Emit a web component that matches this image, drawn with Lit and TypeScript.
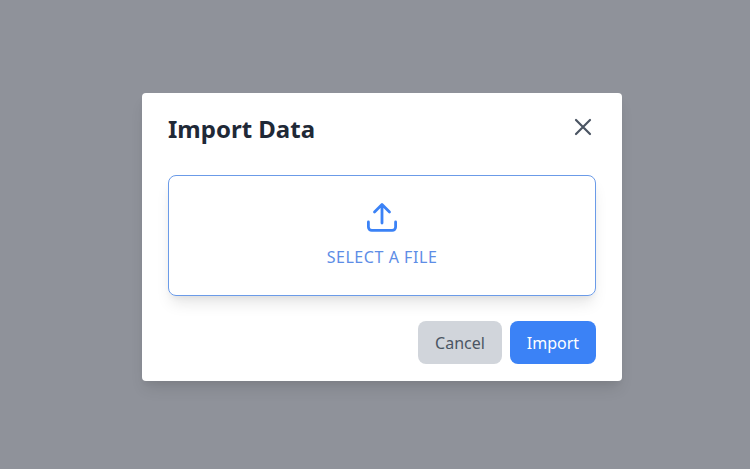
import { LitElement, html, css } from "lit";
import { customElement } from "lit/decorators.js";

@customElement("app-root")
export class AppRoot extends LitElement {
  static styles = css`
    :host { display: block; width: 750px; height: 469px; overflow: hidden; }
    .overlay {
      box-sizing: border-box; width: 750px; height: 469px;
      background: #8f929a; padding: 93px 0 0 142px;
      font-family: "Noto Sans", "Open Sans", sans-serif;
    }
    .modal {
      box-sizing: border-box; width: 480px; height: 288px; background: #fff; border-radius: 4px;
      padding: 18px 26px 17px 26px; display: flex; flex-direction: column;
      box-shadow: 0 10px 15px -3px rgba(0,0,0,.1), 0 4px 6px -2px rgba(0,0,0,.05);
    }
    .head { display: flex; justify-content: space-between; align-items: center; height: 36px; padding-right: 4px; }
    h1 { margin: 0; font-size: 24px; line-height: 36px; font-weight: 700; color: #1f2937; }
    .close { width: 18px; height: 18px; display: block; color: #4b5563; margin-top: -4.5px; }
    .drop {
      box-sizing: border-box; margin-top: 27.5px; height: 121.5px; border: 1px solid #6b9be8; border-radius: 8px;
      display: flex; flex-direction: column; align-items: center; justify-content: flex-start; padding-top: 24.5px;
      box-shadow: 0 10px 15px -3px rgba(0,0,0,.1), 0 4px 6px -2px rgba(0,0,0,.05);
    }
    .icon { width: 36px; height: 36px; display: block; color: #3b82f6; }
    .label { margin-top: 9px; font-size: 16px; line-height: 24px; color: #5d8de6; letter-spacing: .55px; }
    .actions { display: flex; justify-content: flex-end; gap: 8px; margin-top: 25.5px; }
    button {
      font: inherit; font-size: 16px; line-height: 24px; border: 0; border-radius: 8px; height: 43px; padding: 0;
    }
    .cancel { width: 84px; background: #d1d5db; color: #4b5563; }
    .ok { width: 86px; background: #3b82f6; color: #fff; }
  `;

  render() {
    return html`
      <div class="overlay">
        <div class="modal">
          <div class="head">
            <h1>Import Data</h1>
            <svg class="close" viewBox="0 0 18 18" fill="none" stroke="currentColor" stroke-width="2.2" stroke-linecap="round">
              <path d="M2 2 L16 16 M16 2 L2 16"></path>
            </svg>
          </div>
          <div class="drop">
            <svg class="icon" viewBox="0 0 36 36" fill="none" stroke="currentColor" stroke-width="2.8" stroke-linecap="round" stroke-linejoin="round">
              <path d="M4.4 22 V27 A3.4 3.4 0 0 0 7.8 30.4 H28.2 A3.4 3.4 0 0 0 31.6 27 V22"></path>
              <path d="M18 23 V5 M10.5 12 L18 4.5 L25.5 12"></path>
            </svg>
            <div class="label">SELECT A FILE</div>
          </div>
          <div class="actions">
            <button class="cancel">Cancel</button>
            <button class="ok">Import</button>
          </div>
        </div>
      </div>
    `;
  }
}
